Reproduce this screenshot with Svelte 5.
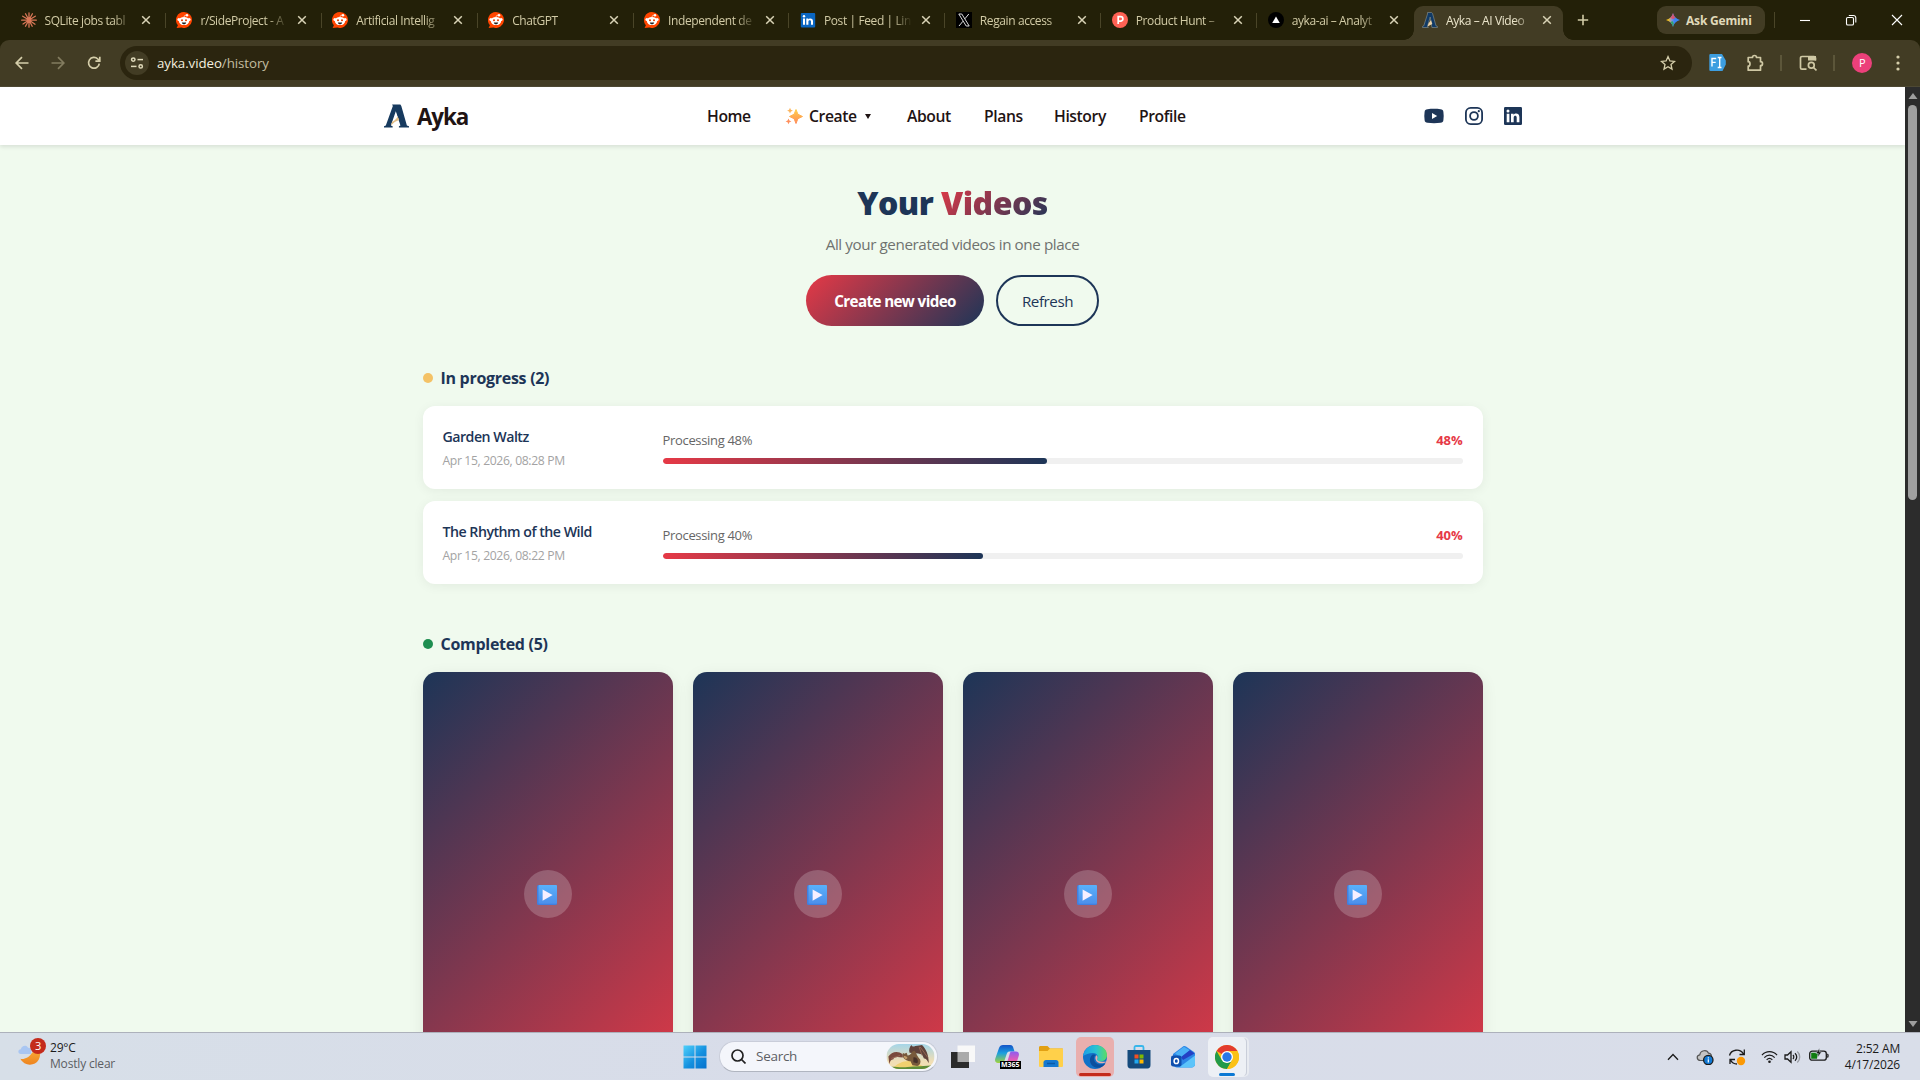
<script>
  // Browser tabs
  const tabs = [
    { title: "SQLite jobs tabl", icon: "claude" },
    { title: "r/SideProject - A", icon: "reddit" },
    { title: "Artificial Intellig", icon: "reddit" },
    { title: "ChatGPT", icon: "reddit" },
    { title: "Independent de", icon: "reddit" },
    { title: "Post | Feed | Lin", icon: "linkedin" },
    { title: "Regain access", icon: "x" },
    { title: "Product Hunt –", icon: "producthunt" },
    { title: "ayka-ai – Analyt", icon: "vercel" },
    { title: "Ayka – AI Video", icon: "ayka", active: true }
  ];

  // Jobs
  const jobs = [
    { title: "Garden Waltz", date: "Apr 15, 2026, 08:28 PM", progress: 48 },
    { title: "The Rhythm of the Wild", date: "Apr 15, 2026, 08:22 PM", progress: 40 }
  ];

  const completedCount = 5;
  const visibleVideos = [1, 2, 3, 4];
</script>

{#snippet aykaLogo()}
  <svg class="ayka-logo" viewBox="0 0 26 24">
    <path d="M8.400 0h8.600l1 1.600 5.800 20.200 2.200.9V24H15.500v-1.300l1.600-.9L12.300 7 7.200 21.800l1.800.9V24H0v-1.300l1.900-.9L9.200 1.600z" fill="#173a5e" />
    <path d="M12.600 9.500l2.700 6.500c-3 .9-5.600 2.800-8 5.800z" fill="#fff" />
    <path d="M14.300 12.500l1.500 3.700c-3.400 1-6 3-8.600 5.600l1.200-3.700c2.500-1 4.300-2.800 5.900-5.600z" fill="#e2bd85" />
  </svg>
{/snippet}

{#snippet favicon(name)}
  <svg class="favicon" viewBox="0 0 16 16">
    {#if name === "claude"}
      <g stroke="#d97757" stroke-width="1.3" stroke-linecap="round">
        <path d="M8 8V.8M8 8l3.400-6.200M8 8l6.300-3.800M8 8l7.300.2M8 8l6 4.200M8 8l3.200 6.200M8 8v7.200M8 8l-3.500 6.300M8 8l-6 4M8 8L.7 8.200M8 8L1.700 4.200M8 8L4.500 1.800" />
      </g>
    {:else if name === "reddit"}
      <path d="M8 0a8 8 0 1 1-2.500 15.600L.6 16l1.300-2.800A8 8 0 0 1 8 0z" fill="#ff4500" />
      <circle cx="2.900" cy="7.600" r="1.500" fill="#fff" />
      <circle cx="13.100" cy="7.600" r="1.500" fill="#fff" />
      <circle cx="11" cy="3.200" r="1.200" fill="#fff" />
      <path d="M8 5.200c.2-1.500.8-2.200 2.400-2" stroke="#fff" stroke-width=".7" fill="none" />
      <ellipse cx="8" cy="9" rx="5.200" ry="4.100" fill="#fff" />
      <circle cx="6" cy="8.300" r="1" fill="#e23c00" />
      <circle cx="10" cy="8.300" r="1" fill="#e23c00" />
      <path d="M5.800 10.500h4.400c-.3 1.300-1.200 1.800-2.200 1.800s-1.900-.5-2.200-1.800z" fill="#222" />
    {:else if name === "linkedin"}
      <rect x=".8" y="1" width="14.400" height="14.400" rx="1" fill="#0a66c2" />
      <path d="M3 6.500h2v6.300H3zM6.300 6.500h2v.9c.9-1.600 4.700-1.500 4.700 1.600v3.800h-2V9.500c0-1.900-2.600-1.700-2.600 0v3.300H6.300z" fill="#fff" />
      <circle cx="4" cy="4.300" r="1.200" fill="#fff" />
    {:else if name === "x"}
      <rect width="16" height="16" fill="#000" />
      <path d="M2.800 2h3l7.400 12h-3zM12.800 2L8.900 6.800M7 9.200L3 14" stroke="#ddd" stroke-width="1" fill="none" />
    {:else if name === "producthunt"}
      <circle cx="8" cy="8" r="8" fill="#ff6154" />
      <path d="M6.200 12V4.700h2.500a2.200 2.200 0 0 1 0 4.400H6.200" stroke="#fff" stroke-width="1.700" fill="none" />
    {:else if name === "vercel"}
      <circle cx="8" cy="8" r="8" fill="#000" />
      <path d="M8 4.500l3.800 6.500H4.200z" fill="#fff" />
    {:else}
      <path d="M5.500.5h4l1 .8 3.500 12.500 1.500.6v1.100h-5.600L8.200 5 5.500 14.400l.8.400v.7H.5v-1.100l1.300-.6L5.500 2z" fill="#103a66" stroke="#8e9690" stroke-width=".6" />
      <path d="M9 8l1.300 4-4.800 2.500 1-3z" fill="#ead3aa" />
    {/if}
  </svg>
{/snippet}

<div class="screen">
  <div class="tab-strip">
    <div class="tabs">
      {#each tabs as tab}
        <div class="tab" class:active={tab.active}>
          {@render favicon(tab.icon)}
          <span class="tab-title">{tab.title}</span>
          <svg class="tab-close" viewBox="0 0 10 10"><path d="M1.200 1.200l7.600 7.600M8.800 1.200L1.200 8.800" /></svg>
        </div>
      {/each}
    </div>
    <svg class="new-tab" viewBox="0 0 12 12"><path d="M6 .8v10.400M.8 6h10.400" /></svg>
    <div class="gemini">
      <svg viewBox="0 0 14 14">
        <defs>
          <linearGradient id="gem" x1="0" y1="0" x2="1" y2="0">
            <stop offset=".15" stop-color="#f9c313" />
            <stop offset=".4" stop-color="#8a8fd8" />
            <stop offset=".6" stop-color="#3b86f5" />
          </linearGradient>
        </defs>
        <path d="M7 0c.8 3.500 3.500 6.200 7 7-3.500.8-6.200 3.500-7 7-.8-3.500-3.500-6.200-7-7 3.500-.8 6.200-3.500 7-7z" fill="url(#gem)" />
        <path d="M7 0c.4 2.200 1.500 3.800 2.700 4.800L7 6.200 4.300 4.800C5.500 3.800 6.600 2.200 7 0z" fill="#f0475a" opacity=".8" />
        <path d="M7 14c-.4-2.200-1.500-3.800-2.700-4.800L6.500 8 7.800 10.500C7.400 11.500 7.200 12.600 7 14z" fill="#25a85a" opacity=".85" />
      </svg>
      <span>Ask Gemini</span>
    </div>
    <div class="strip-divider"></div>
    <div class="window-controls">
      <svg viewBox="0 0 12 12"><path d="M1 6.500h10" /></svg>
      <svg viewBox="0 0 12 12"><rect x="1.500" y="3.500" width="7" height="7.500" rx="1.300" /><path d="M3.800 1.500H8.500a2.300 2.300 0 0 1 2.300 2.300V8.600" /></svg>
      <svg viewBox="0 0 12 12"><path d="M1 1l10 10M11 1L1 11" /></svg>
    </div>
  </div>

  <div class="toolbar">
    <svg class="tool back" viewBox="0 0 16 16"><path d="M14.500 8H2.500M8 2.200L2.200 8 8 13.800" /></svg>
    <svg class="tool forward" viewBox="0 0 16 16"><path d="M1.500 8h12M8 2.200L13.800 8 8 13.800" /></svg>
    <svg class="tool reload" viewBox="0 0 16 16"><path d="M13.300 8.600A5.400 5.400 0 1 1 11.800 4L13.600 5.800M13.800 1.800v4.400H9.400" /></svg>
    <div class="address">
      <div class="site-info">
        <svg viewBox="0 0 14 14"><circle cx="3.300" cy="3.600" r="1.700" /><path d="M7.500 3.600H13" /><circle cx="10.700" cy="10.400" r="1.700" /><path d="M1 10.400h5.500" /></svg>
      </div>
      <span class="url">ayka.video<i>/history</i></span>
      <svg class="star" viewBox="0 0 16 16"><path d="M8 1.600l1.900 4.300 4.600.5-3.500 3.100 1 4.600L8 11.700l-4 2.400 1-4.600L1.500 6.400l4.600-.5z" /></svg>
    </div>
    <svg class="ext" viewBox="0 0 17 17"><path d="M1.500 0H13l3.800 6.500v4L13.500 17h-12A1.200 1.200 0 0 1 .3 15.800V1.200A1.200 1.200 0 0 1 1.500 0z" fill="#3d9ee0" /><path d="M3 12.500V4.500h4.200M3 8.400h3.700M8.700 3.500h1.500l.5.600.5-.6h1.300M10.700 4v9M8.700 13.500h1.500l.5-.6.5.6h1.300" stroke="#fff" stroke-width="1.400" fill="none" /></svg>
    <svg class="puzzle" viewBox="0 0 18 18"><path d="M2.200 3.500h4.300a2 2 0 0 1 4 0h4v4.200a2 2 0 0 1 0 4v4.500H2.200v-4c2.400 0 2.400-4.500 0-4.500z" stroke-linejoin="round" /></svg>
    <div class="tool-divider"></div>
    <svg class="side-search" viewBox="0 0 18 18"><path d="M7.500 15.200H3a1.500 1.500 0 0 1-1.500-1.500V4A1.500 1.500 0 0 1 3 2.500h12A1.500 1.500 0 0 1 16.500 4v2.500" /><path d="M9 2h8v4.500H9z" fill="#cfc8a4" stroke="none" /><circle cx="12.300" cy="11.300" r="2.900" /><path d="M14.500 13.500l3 3" /></svg>
    <div class="tool-divider"></div>
    <div class="avatar">P</div>
    <svg class="menu" viewBox="0 0 4 16"><circle cx="2" cy="2" r="1.600" /><circle cx="2" cy="8" r="1.600" /><circle cx="2" cy="14" r="1.600" /></svg>
  </div>

  <div class="viewport">
    <div class="page">
      <header>
        <div class="brand">
          {@render aykaLogo()}
          <span>Ayka</span>
        </div>
        <nav>
          <span>Home</span>
          <span class="create">
            <svg viewBox="0 0 18 18">
              <defs>
                <linearGradient id="spark" x1="0" y1="0" x2="0" y2="1">
                  <stop offset="0" stop-color="#ffcf4a" />
                  <stop offset="1" stop-color="#ff8a57" />
                </linearGradient>
              </defs>
              <path d="M11 2.500l1.900 4.700L17.500 9.500l-4.600 2.200L11 16.500l-1.900-4.800L4.500 9.500l4.600-2.300z" fill="url(#spark)" stroke="url(#spark)" stroke-linejoin="round" />
              <path d="M5 .8l.9 2 2 .9-2 .9-.9 2-.9-2-2-.9 2-.9z" fill="#fbb35b" />
              <path d="M3.500 11.500l.9 2 2 .9-2 .9-.9 2-.9-2-2-.9 2-.9z" fill="#ff8f5c" />
            </svg>
            Create
            <svg class="caret" viewBox="0 0 6 5"><path d="M0 0h6L3 5z" fill="#1f1414" /></svg>
          </span>
          <span>About</span>
          <span>Plans</span>
          <span>History</span>
          <span>Profile</span>
        </nav>
        <div class="social">
          <svg viewBox="0 0 20 20"><path d="M3.500 3.200c4-.5 9-.5 13 0A3 3 0 0 1 19.400 6c.4 2.700.4 5.300 0 8a3 3 0 0 1-2.900 2.800c-4 .5-9 .5-13 0A3 3 0 0 1 .6 14c-.4-2.700-.4-5.300 0-8a3 3 0 0 1 2.900-2.800z" fill="#1d3557" /><path d="M8 7l5.200 3L8 13z" fill="#fff" /></svg>
          <svg viewBox="0 0 20 20" fill="none" stroke="#1d3557" stroke-width="1.800"><rect x="1.900" y="1.900" width="16.200" height="16.200" rx="4.800" /><circle cx="10" cy="10" r="3.900" /><circle cx="14.800" cy="5.200" r="1.100" fill="#1d3557" stroke="none" /></svg>
          <svg viewBox="0 0 20 20"><rect x="1" y="1" width="18" height="18" rx="1.200" fill="#1d3557" /><path d="M3.700 7.700h2.700v8.600H3.700zM8 7.700h2.600v1.200c1.300-2.200 5.800-2 5.800 2.100v5.300h-2.700v-4.700c0-2.600-3-2.400-3 0v4.700H8z" fill="#fff" /><circle cx="5" cy="5" r="1.500" fill="#fff" /></svg>
        </div>
      </header>

      <main>
        <h1>Your <span>Videos</span></h1>
        <p class="subtitle">All your generated videos in one place</p>
        <div class="actions">
          <button class="primary">Create new video</button>
          <button class="outline">Refresh</button>
        </div>

        <h2><span class="dot pending"></span>In progress ({jobs.length})</h2>
        <div class="jobs">
          {#each jobs as job}
            <div class="job">
              <div class="info">
                <div class="job-title">{job.title}</div>
                <div class="job-date">{job.date}</div>
              </div>
              <div class="progress">
                <div class="progress-label">
                  <span>Processing {job.progress}%</span>
                  <b>{job.progress}%</b>
                </div>
                <div class="bar"><div class="fill" style="width: {job.progress}%"></div></div>
              </div>
            </div>
          {/each}
        </div>

        <h2 class="done-heading"><span class="dot done"></span>Completed ({completedCount})</h2>
        <div class="videos">
          {#each visibleVideos as video (video)}
            <div class="video">
              <div class="play">
                <svg viewBox="0 0 20 20">
                  <defs>
                    <linearGradient id="play" x1="0" y1="0" x2="0" y2="1">
                      <stop offset="0" stop-color="#58b0fb" />
                      <stop offset="1" stop-color="#4c8fea" />
                    </linearGradient>
                  </defs>
                  <rect width="20" height="20" rx="1.500" fill="#3f7fe0" />
                  <rect x="1.500" width="18.500" height="18.800" rx="1" fill="url(#play)" />
                  <path d="M5.600 4.500L15.600 10 5.600 15.700z" fill="#f8efff" />
                </svg>
              </div>
            </div>
          {/each}
        </div>
      </main>
    </div>

    <div class="scrollbar">
      <svg viewBox="0 0 10 8"><path d="M5 1l4.500 6h-9z" /></svg>
      <div class="thumb"></div>
      <svg class="down" viewBox="0 0 10 8"><path d="M5 7L.5 1h9z" /></svg>
    </div>
  </div>

  <div class="taskbar">
    <div class="weather">
      <svg viewBox="0 0 26 28">
        <defs>
          <linearGradient id="moon" x1="0" y1="0" x2="0" y2="1">
            <stop offset="0" stop-color="#fbb53c" />
            <stop offset="1" stop-color="#ee8420" />
          </linearGradient>
        </defs>
        <path d="M14 15c2-1.500 4-5 3.500-8 5.500 3 7 9 4 14.500C17.500 28.500 6.500 28.500 2.500 20.500c4 1 9-1.500 11.500-5.500z" fill="url(#moon)" />
        <path d="M3 15.500c-3.500 0-3.500-4.500 0-4.800C3.500 6.500 9 5.500 10.500 9c3 0 4 3 3 6.500z" fill="#a9c6f2" />
      </svg>
      <span class="badge">3</span>
      <div class="weather-text">
        <div>29°C</div>
        <div class="muted">Mostly clear</div>
      </div>
    </div>

    <div class="apps">
      <div class="app">
        <svg viewBox="0 0 24 24">
          <defs>
            <linearGradient id="win" x1="0" y1="0" x2="1" y2="1">
              <stop offset="0" stop-color="#4fd0fb" />
              <stop offset=".55" stop-color="#1490df" />
              <stop offset="1" stop-color="#0672cd" />
            </linearGradient>
          </defs>
          <path d="M.5.500h11v11H.5zM12.500.500h11v11h-11zM.5 12.500h11v11H.5zM12.500 12.500h11v11h-11z" fill="url(#win)" />
        </svg>
      </div>
      <div class="search">
        <svg class="glass" viewBox="0 0 15 15"><circle cx="6.500" cy="6.500" r="5.500" /><path d="M10.500 10.500l4 4" /></svg>
        <span>Search</span>
        <svg class="art" viewBox="0 0 50 26">
          <defs>
            <linearGradient id="sky" x1="0" y1="0" x2="0" y2="1">
              <stop offset="0" stop-color="#a5d5e8" />
              <stop offset=".7" stop-color="#f1deb4" />
            </linearGradient>
            <clipPath id="pill"><rect width="50" height="26" rx="13" /></clipPath>
          </defs>
          <g clip-path="url(#pill)">
            <rect width="50" height="26" fill="url(#sky)" />
            <path d="M6 26c6-8 18-11 26-6l12 6z" fill="#f0d070" />
            <path d="M0 24c8-1 14 1 22 0s18-1 28-2v4H0z" fill="#5e8c38" />
            <path d="M17 11C11 6 5 9 2 13l1 8c1-4 2-5 4-5 1-3 4-3 10-2z" fill="#7a4a3c" />
            <path d="M24 9c-1-3 0-6 2-8 1 2 2 2 4 1 3 0 5-1 7-1 4 4 7 10 7 19-2-4-3-5-5-5l-2-4-4-1z" fill="#5f423b" />
            <path d="M5 15l9-3M35 3l8 11M34 3l3 9" stroke="#a3705a" stroke-width=".8" fill="none" />
            <path d="M17 9l1.500 1.200L21 9l1 3c4 0 4-5 7-5 2 1 2 5 6 9 1 3 0 6-3 7l-5-1-2-4c-3 0-7-2-8-5z" fill="#77593b" />
            <path d="M18 12.500c2-.5 3 .5 4 2l-2 1.500c-1-.5-2-2-2-3.500z" fill="#c39c66" />
            <path d="M28 14c3-1 6 3 4 6l-4-1z" fill="#463129" />
          </g>
        </svg>
      </div>
      <div class="app">
        <svg viewBox="0 0 24 24">
          <rect x="6.500" y=".5" width="17.500" height="16.500" fill="#f8f8f8" />
          <path d="M0 7h18v16H0z" fill="#2b2b2b" />
          <path d="M6.500 7H18v10H6.500z" fill="#aaa" />
        </svg>
      </div>
      <div class="app">
        <svg viewBox="0 0 24 24">
          <defs>
            <linearGradient id="cop1" x1="0" y1="0" x2="0" y2="1">
              <stop offset="0" stop-color="#1454c8" />
              <stop offset=".45" stop-color="#1a9fe0" />
              <stop offset="1" stop-color="#a3d33b" />
            </linearGradient>
            <linearGradient id="cop2" x1="0" y1="0" x2="0" y2="1">
              <stop offset="0" stop-color="#8d5cf0" />
              <stop offset=".5" stop-color="#e05bb8" />
              <stop offset="1" stop-color="#ff9a63" />
            </linearGradient>
          </defs>
          <path d="M8 0h7c2.500 0 3 1.500 3.700 4l.8 2.500h-5c-2 0-2.500 1.500-3 3l-2 6c-.5 2-1.500 2.500-3 2.500H3c-2.500 0-3.500-2-2.700-4.500L4 3C4.700 1 6 0 8 0z" fill="url(#cop1)" />
          <path d="M16 6.500h5c2.500 0 3.500 2 2.700 4.500L21 19.500c-.7 2-2 3-4 3H10c-1.500 0-2-1-2-2.500 2.500 0 3.500-1 4-2.500l2.500-8c.4-1.500.7-2.500 1.500-3z" fill="url(#cop2)" />
        </svg>
        <span class="m365">M365</span>
      </div>
      <div class="app">
        <svg viewBox="0 0 24 24">
          <path d="M0 2.500C0 1.500.7 1 1.500 1h7l2.500 2.500h12c.6 0 1 .4 1 1V20H0z" fill="#e2a013" />
          <path d="M0 6h8.500l2.500-2.500h12.500c.3 0 .5.300.5.700V20.500c0 1-.5 1.500-1.500 1.500h-21C.5 22 0 21.500 0 20.500z" fill="#ffd04a" />
          <path d="M4.500 22v-4.500c0-1.500 1-2.500 2.500-2.500h10c1.500 0 2.500 1 2.500 2.500V22z" fill="#1579d0" />
          <path d="M8 18.500h8" stroke="#0b5aa8" stroke-width="1.500" />
        </svg>
      </div>
      <div class="app alert">
        <svg viewBox="0 0 24 24">
          <defs>
            <linearGradient id="edge1" x1="0" y1="0" x2="1" y2="0">
              <stop offset="0" stop-color="#1f9ee6" />
              <stop offset=".55" stop-color="#2bc3d2" />
              <stop offset="1" stop-color="#5bdc62" />
            </linearGradient>
          </defs>
          <circle cx="12" cy="12" r="12" fill="#1372c8" />
          <path d="M0 11C1 4.500 6 0 12 0c7 0 12 4.500 12 10 0 4-3 6.500-6.500 6.500-2.500 0-4-1-3.500-2 1.500-2 1-6.500-4-6.500-4 0-8 1.500-10 3z" fill="url(#edge1)" />
          <path d="M9 10c-4 4-2 11.500 4.500 12.700 3.500.5 7-1.200 9-4.200-5 2.500-11.500.5-11.500-5 0-1.500.5-2.500 1.500-3.500-1-.6-2.500-.6-3.500 0z" fill="#0b4f9e" />
          <path d="M14 14.500c.9-1.300.8-3-.3-4.300-2 1-1.800 5.200 1.300 7.300 3 1.600 6.500.8 9-1-3 .5-9.500.5-10-2z" fill="#e9afae" />
        </svg>
        <div class="underline"></div>
      </div>
      <div class="app">
        <svg viewBox="0 0 24 24">
          <path d="M7.500 6V2.500c0-1 .5-1.500 1.500-1.500h6c1 0 1.500.5 1.500 1.500V6" fill="none" stroke="#38b6ea" stroke-width="1.800" />
          <path d="M.5 5h23v15c0 2-1 3.500-3 3.500h-17c-2 0-3-1.500-3-3.500z" fill="#154a7c" />
          <path d="M7.500 9.500h4v4h-4z" fill="#f25022" />
          <path d="M12.500 9.500h4v4h-4z" fill="#7fba00" />
          <path d="M7.500 14.500h4v4h-4z" fill="#20a8ef" />
          <path d="M12.500 14.500h4v4h-4z" fill="#ffb900" />
        </svg>
      </div>
      <div class="app">
        <svg viewBox="0 0 24 24">
          <path d="M2 9L12 1.500c1-.7 2-.6 3 0l8 5.500c.7.500 1 1 1 2V19c0 2-1.500 3.500-3.500 3.500h-14C4.500 22.500 2 21 2 19z" fill="#2c86e6" />
          <path d="M4 8.500L13 1.800l6 3.700L10 12.500z" fill="#4bb0f6" />
          <path d="M10 12L19 5l4.500 3.500L12 15z" fill="#2440c4" />
          <path d="M8 22.500L24 10.500V19c0 2-1.500 3.500-3.500 3.500z" fill="#5cc4fa" />
          <rect y="10.500" width="10.500" height="11" rx="2.200" fill="#0f4fae" />
          <ellipse cx="5.300" cy="16" rx="2.200" ry="2.600" fill="none" stroke="#fff" stroke-width="1.500" />
        </svg>
      </div>
      <div class="app current">
        <svg viewBox="0 0 24 24">
          <circle cx="12" cy="12" r="12" fill="#fbc116" />
          <path d="M12 12L1.600 6A12 12 0 0 1 22.400 6H12z" fill="#e33b2e" />
          <path d="M1.600 6l5.200 9L12 18l0 6A12 12 0 0 1 1.600 6z" fill="#229a4a" />
          <path d="M12 24l5.200-9-5.200 3-2 .5z" fill="#229a4a" />
          <path d="M22.400 6H12v3l5.200 6L12 24A12 12 0 0 0 22.400 6z" fill="#fbc116" />
          <circle cx="12" cy="12" r="6" fill="#fff" />
          <circle cx="12" cy="12" r="4.700" fill="#2a78e8" />
        </svg>
        <div class="underline"></div>
      </div>
    </div>

    <div class="tray">
      <svg class="chevron" viewBox="0 0 12 8"><path d="M1 6.800L6 1.500l5 5.300" /></svg>
      <svg class="cloud" viewBox="0 0 18 16">
        <path d="M4.500 11.500C.5 11.500 0 6.500 3.800 5.800 4.500 1 11 .3 12.500 4.200c3.500.2 4.200 5.500 1 7.300z" fill="#c4c4c4" stroke="#555" stroke-width="1.200" />
        <circle cx="12.300" cy="11" r="4.700" fill="#0f78d4" />
        <path d="M12.300 10.300v3.200M12.300 8.300v1.100" stroke="#fff" stroke-width="1.200" />
      </svg>
      <svg class="sync" viewBox="0 0 18 18">
        <path d="M1.500 7.500C3 1.500 12 0 15.500 6M16.300 1.500V6.500H11.500M2 16v-4.500h5M2.500 12c1 2 3.500 4 6.500 4" />
        <circle cx="13" cy="13" r="4.200" fill="#fb9905" stroke="none" />
      </svg>
      <svg class="wifi" viewBox="0 0 18 14"><path d="M1 5c4.500-4.800 11.500-4.800 16 0M3.500 7.600c3.200-3.300 7.800-3.300 11 0M6 10c1.800-1.800 4.200-1.800 6 0" /><circle cx="9" cy="12" r="1.400" /></svg>
      <svg class="volume" viewBox="0 0 18 14"><path d="M1 5h2.500L7 1.800v10.400L3.500 9H1z" /><path d="M9 5c1 1 1 3 0 4M11 3.200c2.300 2 2.300 5.600 0 7.600" /><path d="M13.300 1.500c3.200 3 3.200 8 0 11" opacity=".35" /></svg>
      <svg class="battery" viewBox="0 0 20 14">
        <rect x=".7" y="3.200" width="16.600" height="9" rx="2.500" />
        <path d="M18.300 6c1 .5 1 2.800 0 3.400" />
        <path d="M2.200 4.700h7L8 10.700H2.200z" fill="#107c10" stroke="none" />
        <path d="M10.500 0L7 5.500h2.300L8.500 9.500l4-5.500h-2.300z" fill="#111" stroke="#d9dee9" stroke-width=".5" />
      </svg>
      <div class="clock">
        <div>2:52 AM</div>
        <div>4/17/2026</div>
      </div>
    </div>
  </div>
</div>

<style>
  :global(body) {
    margin: 0;
    overflow: hidden;
  }

  .screen {
    width: 1920px;
    height: 1080px;
    display: flex;
    flex-direction: column;
    overflow: hidden;
    font-family: "Open Sans", "Noto Sans", sans-serif;
    letter-spacing: -0.025em;
    background: #232008;
  }

  svg {
    display: block;
    flex: none;
  }

  /* Tab strip */
  .tab-strip {
    height: 40px;
    display: flex;
    align-items: center;
    flex: none;
    color: #d2cba6;
    font-size: 12px;
  }

  .tabs {
    display: flex;
    align-self: stretch;
    padding-left: 10px;
  }

  .tab {
    width: 155.9px;
    box-sizing: border-box;
    padding: 0 14.5px 0 10.500px;
    display: flex;
    align-items: center;
    position: relative;
  }

  .tab:not(.active)::after {
    content: "";
    position: absolute;
    right: 0;
    top: 13px;
    width: 1px;
    height: 15px;
    background: #4a4528;
  }

  .tab:nth-last-child(2)::after {
    display: none;
  }

  .tab.active {
    width: 149px;
    height: 34px;
    margin: 6px 0 0 1px;
    padding: 0 11px 6px 8px;
    border-radius: 9px 9px 0 0;
    background: #423c24;
    color: #ebe5cb;
  }

  .tab.active::before,
  .tab.active::after {
    content: "";
    position: absolute;
    top: auto;
    bottom: 0;
    left: -10px;
    width: 10px;
    height: 10px;
    background: radial-gradient(circle at 0 0, transparent 9.5px, #423c24 10px);
  }

  .tab.active::after {
    left: auto;
    right: -10px;
    background: radial-gradient(circle at 100% 0, transparent 9.5px, #423c24 10px);
  }

  .favicon {
    width: 16px;
    height: 16px;
  }

  .tab-title {
    width: 90px;
    margin: 1px auto 0 8px;
    overflow: hidden;
    white-space: nowrap;
    mask-image: linear-gradient(90deg, #000 68px, transparent 88px);
  }

  .tab-close {
    width: 10px;
    height: 10px;
    fill: none;
    stroke: #d9d3b6;
    stroke-width: 1.5;
  }

  .new-tab {
    width: 12px;
    height: 12px;
    margin-left: 14px;
    stroke: #d2cba6;
    stroke-width: 1.6;
  }

  .gemini {
    width: 108px;
    height: 28px;
    margin-left: 68px;
    box-sizing: border-box;
    padding-left: 9px;
    display: flex;
    align-items: center;
    gap: 6px;
    border-radius: 9px;
    background: #423c24;
    color: #e0dabb;
    font-weight: 700;
    letter-spacing: -0.015em;
    white-space: nowrap;
  }

  .gemini svg {
    width: 14px;
    height: 14px;
  }

  .strip-divider {
    width: 1px;
    height: 16px;
    margin-left: 9px;
    background: #4a4528;
  }

  .window-controls {
    display: flex;
    gap: 34px;
    margin-left: 24px;
  }

  .window-controls svg {
    width: 12px;
    height: 12px;
    fill: none;
    stroke: #fff;
    stroke-width: 1.1;
  }

  /* Toolbar */
  .toolbar {
    height: 47px;
    box-sizing: border-box;
    padding: 0 20px 1px 14px;
    display: flex;
    align-items: center;
    flex: none;
    border-radius: 9px 9px 0 0;
    border-bottom: 1px solid #4d4833;
    background: #423c24;
  }

  .tool {
    width: 16px;
    height: 16px;
    margin-right: 20px;
    fill: none;
    stroke: #d5ceaa;
    stroke-width: 1.7;
  }

  .forward {
    stroke: #837c5f;
  }

  .reload {
    margin-right: 18px;
  }

  .address {
    width: 1572px;
    height: 34px;
    box-sizing: border-box;
    padding: 0 16px 0 5px;
    display: flex;
    align-items: center;
    border-radius: 17px;
    background: #2b250f;
  }

  .site-info {
    width: 24px;
    height: 24px;
    display: flex;
    align-items: center;
    justify-content: center;
    border-radius: 50%;
    background: #423c24;
  }

  .site-info svg {
    width: 14px;
    height: 14px;
    fill: none;
    stroke: #e0dabb;
    stroke-width: 1.5;
  }

  .url {
    margin-left: 8px;
    flex: 1;
    color: #f3efdf;
    font-size: 13.3px;
    letter-spacing: -0.005em;
  }

  .url i {
    font-style: normal;
    color: #c3bda0;
  }

  .star {
    width: 16px;
    height: 16px;
    fill: none;
    stroke: #d5ceaa;
    stroke-width: 1.3;
  }

  .ext {
    width: 17px;
    height: 17px;
    margin-left: 17px;
  }

  .puzzle,
  .side-search {
    width: 18px;
    height: 18px;
    margin-left: 20px;
    fill: none;
    stroke: #cfc8a4;
    stroke-width: 1.7;
  }

  .side-search {
    margin-left: 17px;
  }

  .tool-divider {
    width: 2px;
    height: 16px;
    margin-left: 16px;
    background: #5c563a;
  }

  .avatar {
    width: 20px;
    height: 20px;
    margin-left: 17px;
    border-radius: 50%;
    background: #ec407a;
    color: #fff;
    font-size: 11px;
    line-height: 20px;
    text-align: center;
  }

  .menu {
    width: 4px;
    height: 16px;
    margin-left: 24px;
    fill: #d5ceaa;
  }

  /* Page */
  .viewport {
    height: 945px;
    display: flex;
    flex: none;
    overflow: hidden;
  }

  .page {
    width: 1905px;
    background: #f0faee;
  }

  header {
    position: relative;
    height: 58px;
    box-sizing: border-box;
    padding: 0 382px 0 384px;
    display: flex;
    align-items: center;
    justify-content: space-between;
    background: #fff;
    box-shadow: 0 2px 4px rgba(0, 0, 0, 0.1);
  }

  .brand {
    width: 85px;
    display: flex;
    align-items: center;
    gap: 8px;
    color: #1f1414;
    font-size: 22.4px;
    font-weight: 700;
    letter-spacing: -0.05em;
  }

  .ayka-logo {
    width: 25px;
    height: 24px;
  }

  nav {
    display: grid;
    grid-template-columns: 46px 90px 45px 38px 53px 47px;
    gap: 32px;
    color: #1f1414;
    font-size: 15.7px;
    font-weight: 600;
    letter-spacing: -0.026em;
    white-space: nowrap;
  }

  .create {
    display: flex;
    align-items: center;
    gap: 6px;
  }

  .create svg {
    width: 18px;
    height: 18px;
  }

  .create svg.caret {
    width: 6px;
    height: 5px;
    margin-left: 2px;
  }

  .social {
    display: flex;
    gap: 19.5px;
  }

  .social svg {
    width: 20px;
    height: 20px;
  }

  main {
    width: 1060px;
    margin: 0 auto;
    padding-top: 38px;
  }

  h1 {
    margin: 0 0 9px;
    color: #1d3557;
    font-size: 32px;
    font-weight: 800;
    line-height: 40px;
    letter-spacing: -0.016em;
    text-align: center;
  }

  h1 span {
    background: linear-gradient(135deg, #e63946, #1d3557);
    background-clip: text;
    color: transparent;
  }

  .subtitle {
    margin: 0 0 19px;
    color: #6f726f;
    font-size: 15.2px;
    line-height: 24px;
    text-align: center;
  }

  .actions {
    display: flex;
    justify-content: center;
    gap: 12px;
  }

  button {
    height: 51px;
    padding: 0;
    border: 0;
    border-radius: 26px;
    font-family: inherit;
    font-size: 15.2px;
    letter-spacing: -0.04em;
  }

  .primary {
    width: 178px;
    background: linear-gradient(135deg, #e63946, #1d3557);
    color: #fff;
    font-weight: 700;
  }

  .outline {
    width: 103px;
    border: 2px solid #1d3557;
    background: transparent;
    color: #1d3557;
    font-weight: 500;
    letter-spacing: -0.03em;
  }

  h2 {
    margin: 40px 0 16px;
    display: flex;
    align-items: center;
    gap: 8px;
    color: #1d3557;
    font-size: 16px;
    font-weight: 700;
    line-height: 24px;
    letter-spacing: -0.018em;
  }

  .done-heading {
    margin-top: 48px;
  }

  .dot {
    width: 10px;
    height: 10px;
    border-radius: 50%;
  }

  .pending {
    background: #f4c266;
  }

  .done {
    background: #1e8e50;
  }

  .jobs {
    display: flex;
    flex-direction: column;
    gap: 12px;
  }

  .job {
    height: 83px;
    box-sizing: border-box;
    padding: 0 20px;
    display: flex;
    align-items: center;
    gap: 20px;
    border-radius: 12px;
    background: #fff;
    box-shadow: 0 2px 12px rgba(0, 0, 0, 0.06);
  }

  .info {
    width: 200px;
    padding-top: 2px;
  }

  .job-title {
    margin-bottom: 3px;
    color: #1d3557;
    font-size: 14.2px;
    font-weight: 600;
    line-height: 22px;
    letter-spacing: -0.036em;
  }

  .job-date {
    color: #a3a3a3;
    font-size: 12.2px;
    line-height: 20px;
    letter-spacing: -0.03em;
  }

  .progress {
    flex: 1;
    padding-bottom: 2px;
  }

  .progress-label {
    margin-bottom: 7px;
    display: flex;
    justify-content: space-between;
    color: #666;
    font-size: 13px;
    line-height: 22px;
    letter-spacing: -0.025em;
  }

  .progress-label b {
    color: #e63946;
    letter-spacing: -0.01em;
  }

  .bar {
    height: 6px;
    border-radius: 3px;
    background: #f0f0f0;
    overflow: hidden;
  }

  .fill {
    height: 6px;
    border-radius: 3px;
    background: linear-gradient(90deg, #e63946, #1d3557);
  }

  .videos {
    display: grid;
    grid-template-columns: repeat(4, 250px);
    gap: 20px;
  }

  .video {
    aspect-ratio: 9 / 16;
    display: flex;
    align-items: center;
    justify-content: center;
    border-radius: 14px;
    background: linear-gradient(135deg, #1d3557, #e63946);
    box-shadow: 0 4px 16px rgba(0, 0, 0, 0.08);
  }

  .play {
    width: 48px;
    height: 48px;
    display: flex;
    align-items: center;
    justify-content: center;
    border-radius: 50%;
    background: rgba(255, 255, 255, 0.2);
  }

  .play svg {
    width: 20px;
    height: 20px;
    margin: 2px 1px 0 0;
  }

  .scrollbar {
    width: 15px;
    padding: 5px 0 4px;
    box-sizing: border-box;
    display: flex;
    flex-direction: column;
    align-items: center;
    background: #2c2c2c;
  }

  .scrollbar svg {
    width: 10px;
    height: 8px;
    fill: #9f9f9f;
  }

  .thumb {
    width: 9px;
    height: 395px;
    margin-top: 5px;
    border-radius: 5px;
    background: #9f9f9f;
  }

  .scrollbar .down {
    margin-top: auto;
  }

  /* Taskbar */
  .taskbar {
    height: 48px;
    box-sizing: border-box;
    display: flex;
    flex: none;
    border-top: 1px solid #adb1bb;
    background: linear-gradient(90deg, #d7dfe8, #d8dce9 45%, #d9dee9);
    color: #1b1b1b;
    font-size: 12px;
    line-height: 16px;
    letter-spacing: -0.015em;
  }

  .weather {
    width: 672.5px;
    position: relative;
    display: flex;
    padding: 6px 0 0 18px;
    box-sizing: border-box;
  }

  .weather svg {
    width: 25px;
    height: 27px;
  }

  .badge {
    position: absolute;
    left: 30px;
    top: 5px;
    width: 16px;
    height: 16px;
    border-radius: 50%;
    background: #c42b1c;
    color: #fff;
    font-size: 11px;
    text-align: center;
  }

  .weather-text {
    margin: 1px 0 0 7px;
  }

  .muted {
    color: #5b5d62;
  }

  .apps {
    display: flex;
    align-items: center;
  }

  .app {
    width: 38px;
    height: 40px;
    margin: 0 3px;
    display: flex;
    align-items: center;
    justify-content: center;
    position: relative;
    border-radius: 5px;
  }

  .app svg {
    width: 24px;
    height: 24px;
  }

  .m365 {
    position: absolute;
    left: 12px;
    top: 24px;
    padding: 0 1px;
    background: #000;
    color: #fff;
    font-size: 7px;
    font-weight: 700;
    line-height: 8px;
    letter-spacing: 0;
  }

  .alert {
    background: #e9afae;
  }

  .current {
    background: #edf0f5;
    box-shadow: 2px 0 0 -1px #c9ced9, 3px 0 0 #e8ebf1;
  }

  .underline {
    position: absolute;
    bottom: 1px;
    left: 11px;
    width: 16px;
    height: 3px;
    border-radius: 2px;
    background: #0b78d4;
  }

  .alert .underline {
    left: 3px;
    width: 32px;
    background: #c42b1c;
  }

  .search {
    width: 219px;
    height: 31px;
    margin: 0 3px 1px 2.5px;
    box-sizing: border-box;
    padding: 0 2px 0 11px;
    display: flex;
    align-items: center;
    border: 1px solid #c9cdd9;
    border-bottom-color: #b0b5c0;
    border-radius: 16px;
    background: #f4f6fb;
    color: #5d5f64;
    font-size: 13.5px;
    letter-spacing: -0.02em;
  }

  .search span {
    margin: 0 auto 0 10px;
  }

  .glass {
    width: 15px;
    height: 15px;
    fill: none;
    stroke: #222;
    stroke-width: 1.7;
  }

  .art {
    width: 49px;
    height: 25px;
  }

  .tray {
    margin-left: auto;
    padding-right: 20px;
    display: flex;
    align-items: center;
  }

  .tray svg {
    fill: none;
    stroke: #1b1b1b;
    stroke-width: 1.3;
  }

  .chevron {
    width: 12px;
    height: 8px;
    margin-right: 17px;
  }

  .cloud {
    width: 18px;
    height: 16px;
    margin-right: 14px;
  }

  .sync {
    width: 18px;
    height: 18px;
    margin-right: 15px;
  }

  .tray .wifi {
    width: 17px;
    height: 14px;
    margin-right: 6px;
  }

  .wifi circle {
    fill: #1b1b1b;
    stroke: none;
  }

  .volume {
    width: 18px;
    height: 14px;
    margin-right: 7px;
  }

  .battery {
    width: 20px;
    height: 14px;
    margin: -3px 0 0;
  }

  .clock {
    width: 71px;
    text-align: right;
  }
</style>
